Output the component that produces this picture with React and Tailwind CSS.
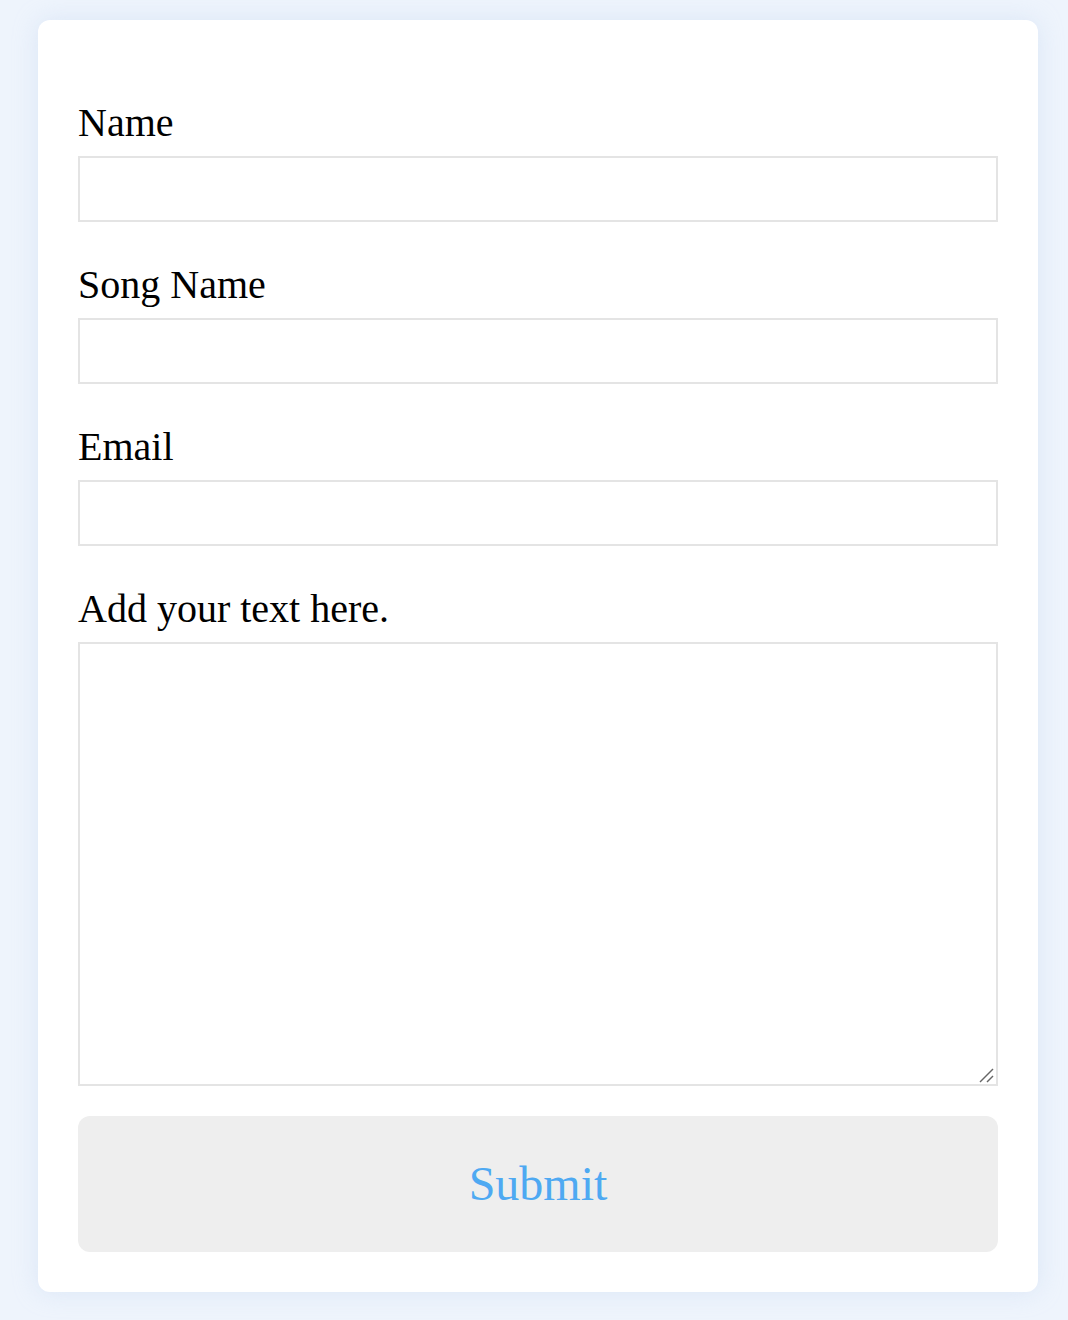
export default function App() {
  const fields = ["Name", "Song Name", "Email"];
  return (
    <div className="min-h-[1320px] w-[1068px] bg-[#eef4fc] pt-[20px] pb-[28px] px-[38px] [font-family:'Liberation_Serif','Times_New_Roman',serif]">
      <div className="w-[1000px] bg-white rounded-[12px] shadow-[0_0_24px_rgba(190,210,240,0.4)] px-[40px] pb-[40px] pt-[80px]">
        {fields.map((f) => (
          <div key={f} className="flex flex-col">
            <label className="text-[40px] leading-[46px] text-black mb-[10px]">{f}</label>
            <input className="h-[66px] w-[920px] border-2 border-[#e4e4e4] bg-white outline-none mb-[40px]" />
          </div>
        ))}
        <div className="flex flex-col">
          <label className="text-[40px] leading-[46px] text-black mb-[10px]">Add your text here.</label>
          <div className="relative w-[920px] h-[444px]">
            <textarea className="h-[444px] w-[920px] border-2 border-[#e4e4e4] bg-white outline-none block resize-none" />
            <svg className="absolute right-[4px] bottom-[3px] pointer-events-none" width="16" height="16" viewBox="0 0 16 16">
              <line x1="2" y1="15" x2="15" y2="2" stroke="#666" strokeWidth="1.4" />
              <line x1="9" y1="15" x2="15" y2="9" stroke="#666" strokeWidth="1.4" />
            </svg>
          </div>
        </div>
        <button className="mt-[30px] h-[136px] w-[920px] rounded-[12px] bg-[#eeeeee] text-[48px] text-[#4ea9f2] flex items-center justify-center">
          Submit
        </button>
      </div>
    </div>
  );
}
